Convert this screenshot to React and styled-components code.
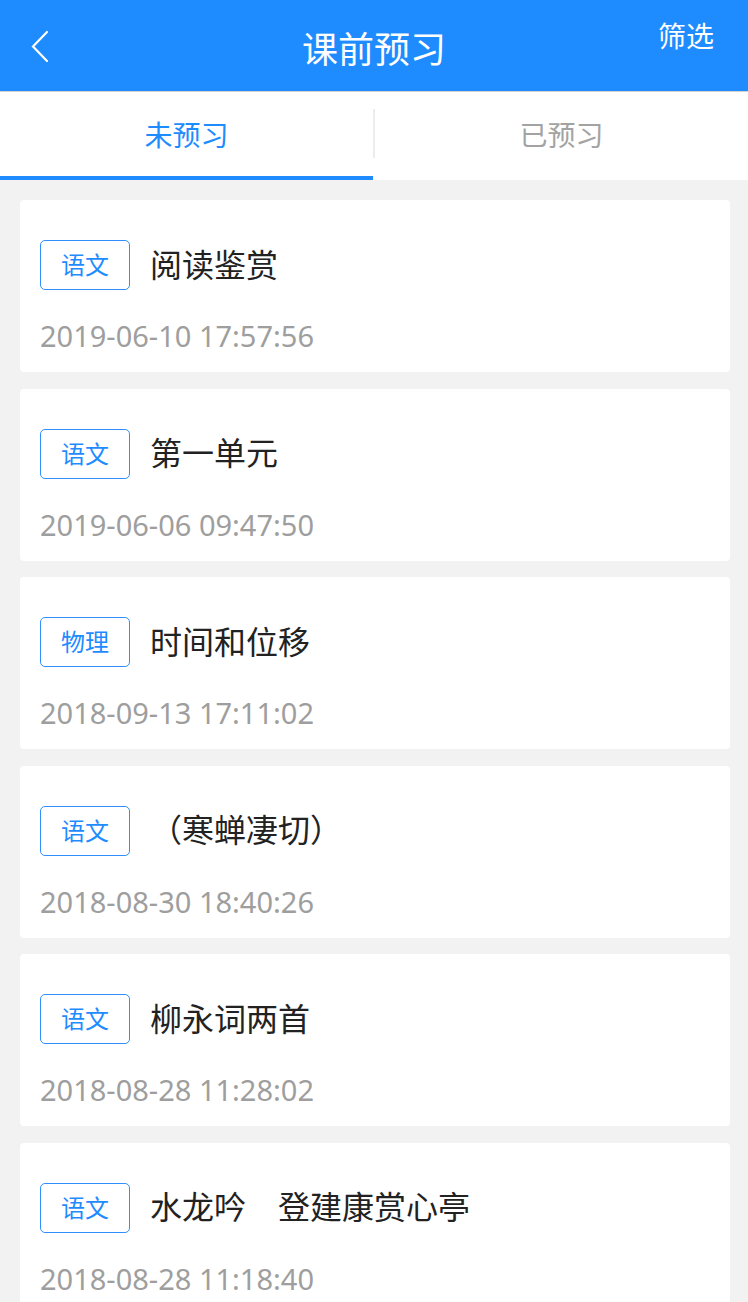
import React from "react";
import styled, { createGlobalStyle } from "styled-components";

const GlobalStyle = createGlobalStyle`
  html, body {
    margin: 0;
    padding: 0;
    background: #f2f2f2;
  }
  body {
    font-family: "Noto Sans CJK SC", "Noto Sans", sans-serif;
  }
  #root {
    height: 1302px;
    overflow: hidden;
  }
`;

const BLUE = "#1e8bff";

const Page = styled.div`
  width: 748px;
  min-height: 1302px;
  background: #f2f2f2;
  display: flex;
  flex-direction: column;
`;

const Header = styled.header`
  height: 91px;
  background: ${BLUE};
  border-bottom: 1px solid #d3d3d3;
  display: grid;
  grid-template-columns: 120px 1fr 120px;
  align-items: center;
`;

const BackButton = styled.div`
  display: flex;
  align-items: center;
  padding-left: 30px;
  height: 100%;
`;

const Title = styled.h1`
  margin: 0;
  text-align: center;
  color: #fff;
  font-size: 36px;
  line-height: 36px;
  font-weight: 400;
  padding-top: 2px;
`;

const Filter = styled.div`
  align-self: start;
  justify-self: end;
  padding: 21px 34px 0 0;
  color: #fff;
  font-size: 28px;
  line-height: 28px;
`;

const TabBar = styled.nav`
  height: 88px;
  background: #fff;
  display: flex;
  align-items: center;
`;

const Tab = styled.div`
  flex: 1;
  height: 88px;
  box-sizing: border-box;
  display: flex;
  align-items: center;
  justify-content: center;
  font-size: 28px;
  line-height: 28px;
  color: ${(p) => (p.$active ? BLUE : "#a3a3a3")};
  border-bottom: 4px solid ${(p) => (p.$active ? BLUE : "transparent")};
`;

const TabDivider = styled.div`
  width: 2px;
  height: 49px;
  margin-top: -6px;
  background: #ececec;
`;

const List = styled.main`
  display: flex;
  flex-direction: column;
  gap: 16.6px;
  padding: 20px 18px 0 20px;
`;

const Card = styled.article`
  height: 172px;
  box-sizing: border-box;
  background: #fff;
  border-radius: 4px;
  padding: 40px 20px 0 20px;
`;

const Row = styled.div`
  display: flex;
  align-items: center;
  gap: 20px;
`;

const Tag = styled.span`
  width: 90px;
  height: 50px;
  box-sizing: border-box;
  border: 1px solid #2f8fff;
  border-radius: 5px;
  display: flex;
  align-items: center;
  justify-content: center;
  padding-bottom: 2px;
  color: ${BLUE};
  font-size: 24px;
  line-height: 24px;
`;

const CardTitle = styled.span`
  font-size: 32px;
  line-height: 32px;
  padding-bottom: 5px;
  color: #222;
  white-space: pre;
`;

const DateText = styled.div`
  margin-top: 28px;
  font-family: "Noto Sans", sans-serif;
  font-size: 29px;
  line-height: 36px;
  color: #9e9e9e;
`;

const items = [
  { tag: "语文", title: "阅读鉴赏", date: "2019-06-10 17:57:56" },
  { tag: "语文", title: "第一单元", date: "2019-06-06 09:47:50" },
  { tag: "物理", title: "时间和位移", date: "2018-09-13 17:11:02" },
  { tag: "语文", title: "（寒蝉凄切）", date: "2018-08-30 18:40:26" },
  { tag: "语文", title: "柳永词两首", date: "2018-08-28 11:28:02" },
  { tag: "语文", title: "水龙吟\u3000登建康赏心亭", date: "2018-08-28 11:18:40" },
];

const BackIcon = () => (
  <svg width="20" height="34" viewBox="0 0 20 34" fill="none">
    <polyline
      points="17,3 3,17.5 17,32"
      stroke="#fff"
      strokeWidth="2.2"
      strokeLinecap="round"
      strokeLinejoin="miter"
    />
  </svg>
);

export default function App() {
  return (
    <>
      <GlobalStyle />
      <Page>
        <Header>
          <BackButton>
            <BackIcon />
          </BackButton>
          <Title>课前预习</Title>
          <Filter>筛选</Filter>
        </Header>
        <TabBar>
          <Tab $active>未预习</Tab>
          <TabDivider />
          <Tab>已预习</Tab>
        </TabBar>
        <List>
          {items.map((it, i) => (
            <Card key={i}>
              <Row>
                <Tag>{it.tag}</Tag>
                <CardTitle>{it.title}</CardTitle>
              </Row>
              <DateText>{it.date}</DateText>
            </Card>
          ))}
        </List>
      </Page>
    </>
  );
}
